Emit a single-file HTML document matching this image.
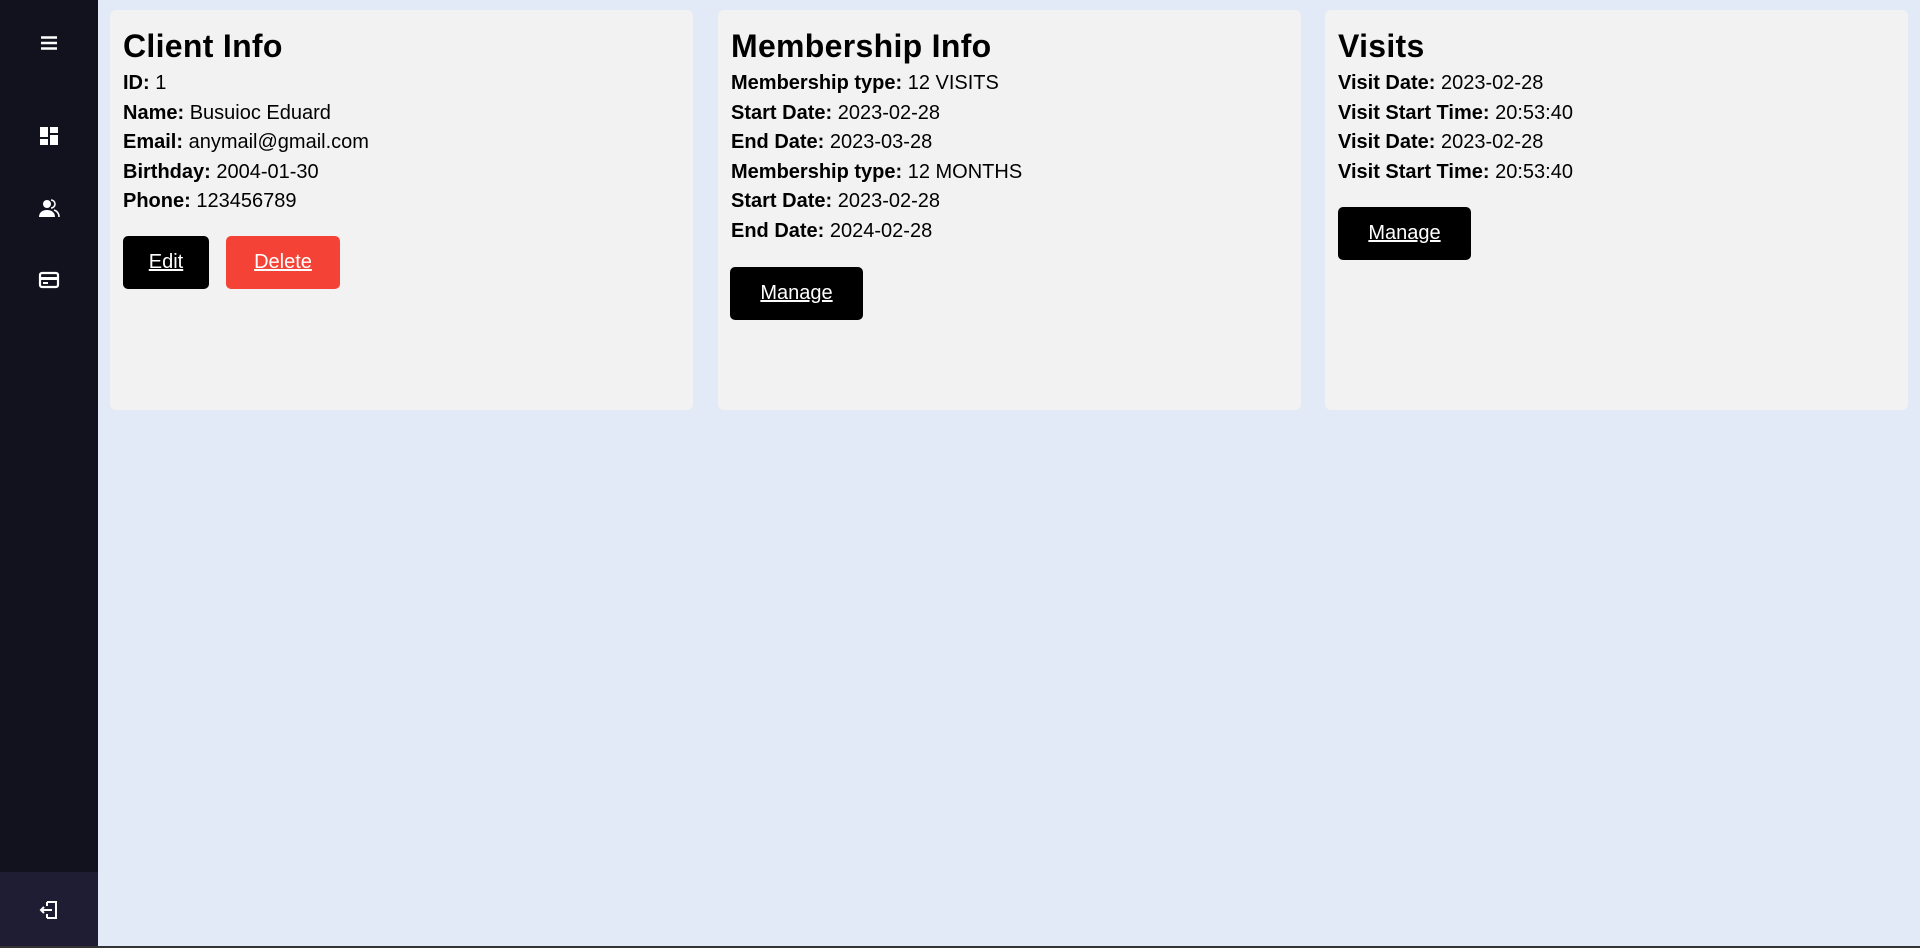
<!DOCTYPE html>
<html><head><meta charset="utf-8"><style>
*{box-sizing:border-box;margin:0;padding:0}
html,body{width:1920px;height:948px;overflow:hidden}
body{background:#e3eaf7;font-family:"Liberation Sans",sans-serif;color:#000;position:relative}
.side{position:absolute;left:0;top:0;width:98px;height:946px;background:#12121f}
.side .bot{position:absolute;left:0;top:872px;width:98px;height:74px;background:#1e1d33}
.ic{position:absolute;left:37px;width:24px;height:24px}
.bar{position:absolute;left:0;top:946px;width:1920px;height:2px;background:#333}
.card{position:absolute;top:10px;width:583px;height:400px;background:#f2f2f2;border-radius:6px;padding:13px 13px}
h2{font-size:32px;font-weight:bold;line-height:36px;margin-top:5px;margin-bottom:5px;letter-spacing:.3px}
p{font-size:20px;line-height:29.6px}
.btn{display:inline-block;height:53px;line-height:53px;color:#fff;background:#000;border-radius:5px;text-decoration:underline;font-size:20px;text-align:center;position:absolute}
</style></head><body>
<div class="side">
<svg class="ic" style="top:31px" viewBox="0 0 24 24"><path d="M4 6.5h16M4 12h16M4 17.5h16" stroke="#fff" stroke-width="2.6"/></svg>
<svg class="ic" style="top:124px" viewBox="0 0 24 24" fill="#fff"><rect x="3" y="3" width="8" height="10"/><rect x="13" y="3" width="8" height="6"/><rect x="13" y="11" width="8" height="10"/><rect x="3" y="15" width="8" height="6"/></svg>
<svg class="ic" style="top:196px" viewBox="0 0 24 24" fill="#fff"><circle cx="10" cy="8" r="4"/><path d="M2 21c0-5 4-7 8-7s8 2 8 7z"/><path d="M14 4a4 4 0 0 1 0 8M17 14c3 1 5 3 5 7" stroke="#fff" stroke-width="1.6" fill="none"/></svg>
<svg class="ic" style="top:268px" viewBox="0 0 24 24"><rect x="3" y="5" width="18" height="14" rx="2" fill="none" stroke="#fff" stroke-width="2.2"/><rect x="3" y="9" width="18" height="3" fill="#fff"/><rect x="6" y="14" width="5" height="2" fill="#fff"/></svg>
<div class="bot"></div>
<svg class="ic" style="top:898px" viewBox="0 0 24 24" fill="none" stroke="#fff" stroke-width="2"><path d="M10 4h9v16h-9M10 8v-4M10 20v-4M15 12H4M7 9l-3 3 3 3"/></svg>
</div>
<div class="card" style="left:110px">
<h2>Client Info</h2>
<p><b>ID:</b> 1</p><p><b>Name:</b> Busuioc Eduard</p><p><b>Email:</b> anymail@gmail.com</p><p><b>Birthday:</b> 2004-01-30</p><p><b>Phone:</b> 123456789</p>
<span class="btn" style="left:13px;top:226px;width:86px">Edit</span>
<span class="btn" style="left:116px;top:226px;width:114px;background:#f44336">Delete</span>
</div>
<div class="card" style="left:718px">
<h2>Membership Info</h2>
<p><b>Membership type:</b> 12 VISITS</p><p><b>Start Date:</b> 2023-02-28</p><p><b>End Date:</b> 2023-03-28</p><p><b>Membership type:</b> 12 MONTHS</p><p><b>Start Date:</b> 2023-02-28</p><p><b>End Date:</b> 2024-02-28</p>
<span class="btn" style="left:12px;top:257px;width:133px">Manage</span>
</div>
<div class="card" style="left:1325px">
<h2>Visits</h2>
<p><b>Visit Date:</b> 2023-02-28</p><p><b>Visit Start Time:</b> 20:53:40</p><p><b>Visit Date:</b> 2023-02-28</p><p><b>Visit Start Time:</b> 20:53:40</p>
<span class="btn" style="left:13px;top:197px;width:133px">Manage</span>
</div>
<div class="bar"></div>
</body></html>
